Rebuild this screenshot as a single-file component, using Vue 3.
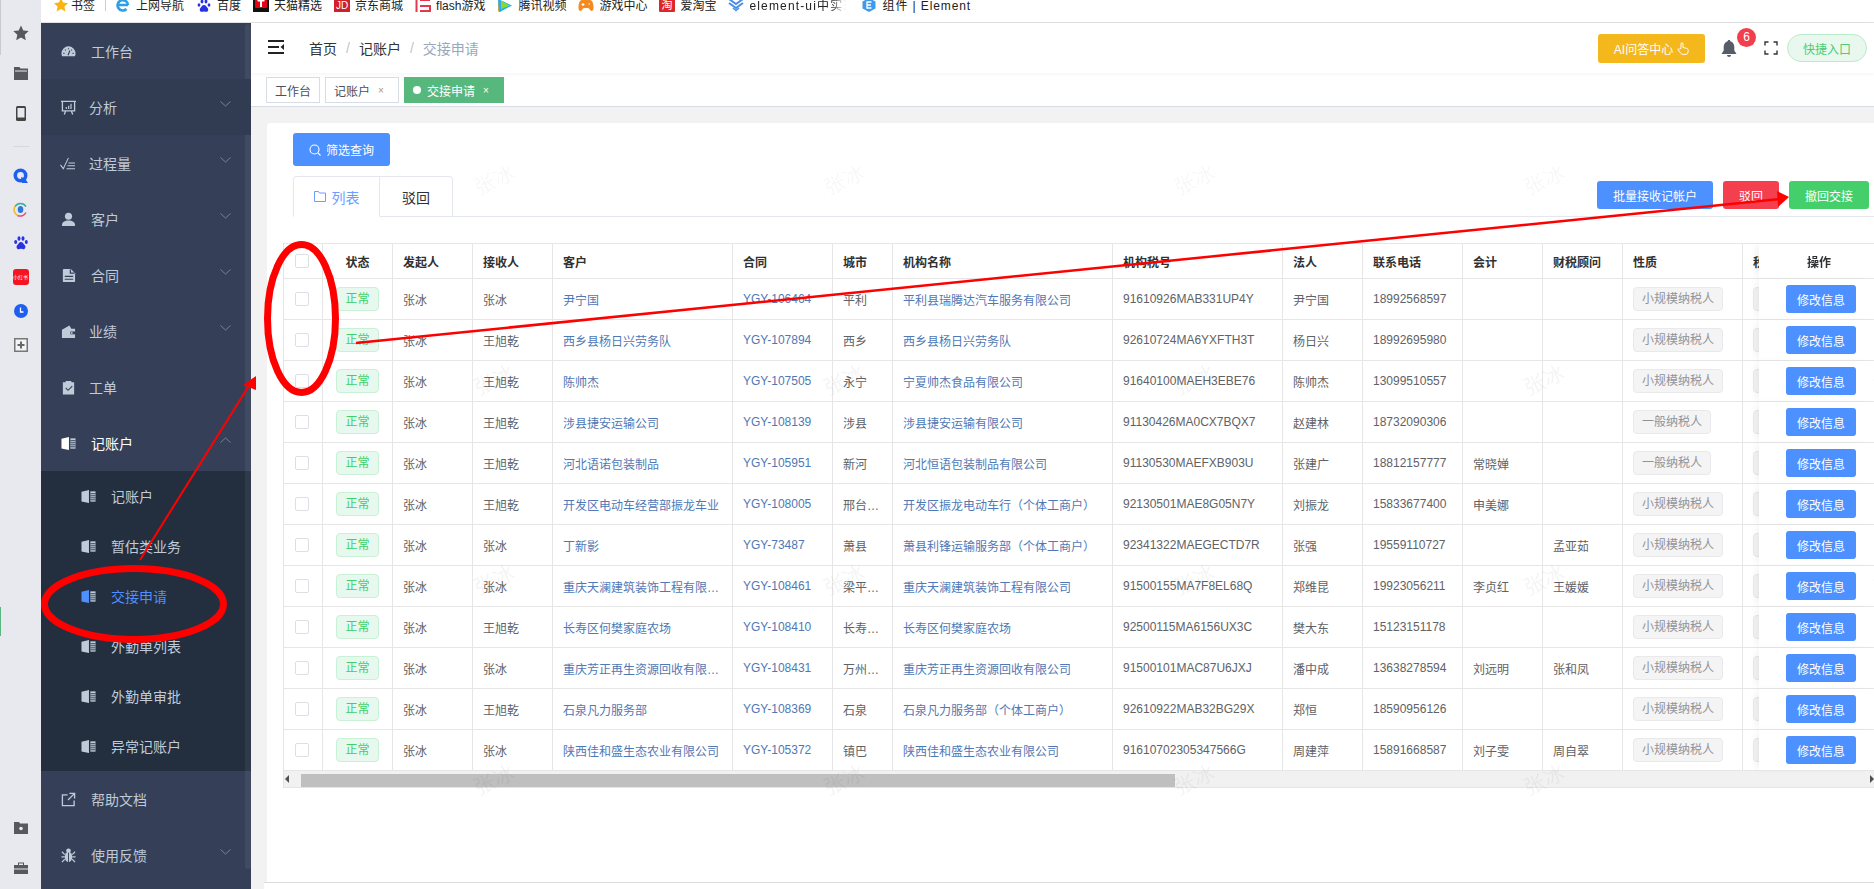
<template>
  <div class="page">
    <aside class="rail">
      <i class="rail-edge"></i>
      <i class="rail-mark"></i>
      <div class="rail-group">
        <span class="rail-btn"><svg width="16" height="16" viewBox="0 0 16 16"><path fill="#55585f" d="M8 .5l2.300 5 5.400.6-4 3.700 1.100 5.400L8 12.400l-4.800 2.800 1.100-5.400-4-3.700 5.400-.6z"/></svg></span>
        <span class="rail-btn"><svg width="14" height="13" viewBox="0 0 14 13"><path fill="#55585f" d="M0 0h5.500l1 1.500H14V13H0z"/><path stroke="#e8e9ef" d="M1 4h12"/></svg></span>
        <span class="rail-btn"><svg width="10" height="15" viewBox="0 0 10 15"><rect width="10" height="15" rx="1.500" fill="#444"/><rect x="1.500" y="2" width="7" height="9.500" fill="#e8e9ef"/></svg></span>
      </div>
      <hr class="rail-sep" />
      <div class="rail-apps">
        <span class="rail-app"><svg width="15" height="15" viewBox="0 0 15 15"><circle cx="7.500" cy="7.500" r="5.200" fill="none" stroke="#1e5ff0" stroke-width="3.600"/><path fill="#1e5ff0" d="M8 9l4 1.500 3 4.500H9z"/></svg></span>
        <span class="rail-app"><svg width="15" height="15" viewBox="0 0 15 15"><path fill="none" stroke="#33b1a0" stroke-width="1.500" d="M2 4.500a6.500 6.500 0 0 1 11 0"/><path fill="none" stroke="#f0b92a" stroke-width="1.500" d="M2 4.500a6.500 6.500 0 0 0 2.500 9"/><path fill="none" stroke="#e84a6f" stroke-width="1.500" d="M4.500 13.500a6.500 6.500 0 0 0 8.500-3"/><ellipse cx="7.500" cy="7.500" rx="2.800" ry="3.600" fill="#2e78d8"/></svg></span>
        <span class="rail-app"><svg width="14" height="14" viewBox="0 0 14 14"><g fill="#2932e1"><ellipse cx="1.700" cy="6" rx="1.500" ry="2"/><ellipse cx="5" cy="2.500" rx="1.500" ry="2.200"/><ellipse cx="9" cy="2.500" rx="1.500" ry="2.200"/><ellipse cx="12.300" cy="6" rx="1.500" ry="2"/><path d="M7 6c-2 0-2.500 2-3.800 3.200C2 10.500 2.500 13.500 5 13.200c1-.1 1.200-.4 2-.4s1 .3 2 .4c2.500.3 3-2.700 1.800-4C9.500 8 9 6 7 6z"/></g></svg></span>
        <span class="rail-app"><span class="red-app">小红书</span></span>
        <span class="rail-app"><svg width="14" height="14" viewBox="0 0 14 14"><circle cx="7" cy="7" r="7" fill="#1e5ff0"/><path d="M6.500 3.500v4.500h3" fill="none" stroke="#fff" stroke-width="1.300"/></svg></span>
        <span class="rail-app"><svg width="14" height="14" viewBox="0 0 14 14"><rect x=".75" y=".75" width="12.500" height="12.500" fill="#f4f4f6" stroke="#777" stroke-width="1.500"/><path d="M3.500 7h7M7 3.500v7" stroke="#666" stroke-width="2"/></svg></span>
      </div>
      <div class="rail-bottom">
        <span class="rail-btn"><svg width="14" height="12" viewBox="0 0 14 12"><path fill="#55585f" d="M0 0h5l1 1.500h8V12H0z"/><circle cx="7" cy="6.500" r="1.800" fill="#e8e9ef"/></svg></span>
        <span class="rail-btn"><svg width="14" height="12" viewBox="0 0 14 12"><path fill="#55585f" d="M0 3h4V.5h6V3h4v3.500H0zM5 1.500V3h4V1.500zM0 7.500h14V12H0z"/></svg></span>
      </div>
    </aside>

    <div class="shell">
      <nav class="bookmarks">
        <span class="bm"><svg class="bm-star" width="14" height="14" viewBox="0 0 16 16"><path fill="#fbb40f" d="M8 0l2.400 5.200 5.600.7-4.100 3.900 1.100 5.600L8 12.600l-5 2.800 1.100-5.600L0 5.900l5.600-.7z"/></svg>书签</span>
        <i class="bm-sep"></i>
        <span class="bm" v-for="b in bookmarks" :key="b.label" :class="b.cls">
          <span class="bm-icon" v-html="b.icon"></span><span class="bm-text">{{ b.label }}</span>
        </span>
      </nav>

      <div class="body">
        <aside class="sidebar">
          <i class="side-scroll"></i>
          <template v-for="m in menu" :key="m.label">
            <div class="menu-item" :class="{ open: m.children, hovered: m.label === '分析' }" :style="{ paddingLeft: m.left + 'px' }">
              <svg class="menu-icon" :width="m.iw || 15" height="15" :viewBox="`0 0 ${m.iw || 16} 16`" v-html="icons[m.icon]"></svg>
              <span class="menu-label" :style="{ marginLeft: m.gap + 'px' }">{{ m.label }}</span>
              <svg v-if="m.arrow || m.children" class="chevron" :class="{ up: m.children }" width="11" height="6" viewBox="0 0 11 6"><path d="M.5.500l5 4.500 5-4.500" fill="none" stroke="#75819a"/></svg>
            </div>
            <div v-if="m.children" class="submenu">
              <div v-for="c in m.children" :key="c" class="sub-item" :class="{ active: c === '交接申请' }">
                <svg class="menu-icon" width="15" height="15" viewBox="0 0 16 16" v-html="icons.book"></svg>
                <span>{{ c }}</span>
              </div>
            </div>
          </template>
        </aside>

        <main class="main">
          <header class="topbar">
            <svg class="fold" width="16" height="14" viewBox="0 0 16 14"><path d="M0 1h16M0 7h11M0 13h16" stroke="#222" stroke-width="1.800"/><path d="M16 4v6L12.500 7z" fill="#222"/></svg>
            <div class="crumbs">
              <span>首页</span><em>/</em><span>记账户</span><em>/</em><span class="current">交接申请</span>
            </div>
            <div class="top-right">
              <button class="ai-btn">AI问答中心
                <svg width="12" height="13" viewBox="0 0 12 13"><path d="M4 6.500V1.800a1 1 0 0 1 2 0v3.700l3.800.9c1 .3 1.500 1 1.400 2l-.4 2.500c-.1.800-.8 1.400-1.600 1.400H5.500c-.6 0-1-.2-1.400-.7L1.200 8.200c-.6-.9.600-2 1.400-1.200z" fill="none" stroke="#fff"/></svg>
              </button>
              <span class="bell">
                <svg width="16" height="17" viewBox="0 0 16 17"><path fill="#565c68" d="M8 0c.8 0 1.300.5 1.300 1.200C12 2 13.300 4.200 13.300 7v3.500L15.500 14H.5l2.200-3.500V7c0-2.800 1.300-5 4-5.800C6.700.5 7.200 0 8 0zM6 15h4a2 2 0 0 1-4 0z"/></svg>
                <b class="badge">6</b>
              </span>
              <svg class="full" width="14" height="14" viewBox="0 0 14 14"><path d="M1 4.500V1h3.500M9.500 1H13v3.500M13 9.500V13H9.500M4.500 13H1V9.500" fill="none" stroke="#333" stroke-width="1.400"/></svg>
              <button class="quick">快捷入口</button>
            </div>
          </header>

          <div class="tags">
            <span class="tag">工作台</span>
            <span class="tag">记账户<i>×</i></span>
            <span class="tag on"><u></u>交接申请<i>×</i></span>
          </div>

          <div class="content">
            <section class="card">
              <button class="btn blue filter">
                <svg width="12" height="12" viewBox="0 0 12 12"><circle cx="5.500" cy="5.500" r="4.500" fill="none" stroke="#fff" stroke-width="1.100"/><path d="M9 9l2.500 2.500" stroke="#fff" stroke-width="1.100"/></svg>筛选查询
              </button>

              <div class="tabbar">
                <div class="tab on">
                  <svg width="12" height="11" viewBox="0 0 12 11"><path d="M.5 10.500V.5h4l1 1.500h6v8.500z" fill="none" stroke="#6f9cff"/></svg>列表
                </div>
                <div class="tab">驳回</div>
                <div class="tab-actions">
                  <button class="btn blue small">批量接收记帐户</button>
                  <button class="btn red small">驳回</button>
                  <button class="btn green small">撤回交接</button>
                </div>
              </div>

              <div class="table-wrap">
                <table class="grid">
                  <colgroup>
                    <col v-for="(w, i) in widths" :key="i" :style="{ width: w + 'px' }" />
                  </colgroup>
                  <thead>
                    <tr>
                      <th class="center"><span class="check"></span></th>
                      <th class="center">状态</th>
                      <th v-for="h in heads" :key="h">{{ h }}</th>
                      <th class="op op-head">操作</th>
                    </tr>
                  </thead>
                  <tbody>
                    <tr v-for="r in rows" :key="r.contract">
                      <td class="center"><span class="check"></span></td>
                      <td class="center"><span class="pill ok">正常</span></td>
                      <td>张冰</td>
                      <td>{{ r.to }}</td>
                      <td class="link">{{ r.client }}</td>
                      <td class="link">{{ r.contract }}</td>
                      <td>{{ r.city }}</td>
                      <td class="link">{{ r.org }}</td>
                      <td>{{ r.tax }}</td>
                      <td>{{ r.legal }}</td>
                      <td>{{ r.phone }}</td>
                      <td>{{ r.acct }}</td>
                      <td>{{ r.adviser }}</td>
                      <td><span class="pill gray">{{ r.kind }}</span></td>
                      <td><span class="pill gray">已报税</span></td>
                      <td class="op"><button class="btn blue edit">修改信息</button></td>
                    </tr>
                  </tbody>
                </table>
                <div class="hscroll">
                  <span class="arrow left"></span>
                  <span class="thumb"></span>
                  <span class="arrow right"></span>
                </div>
              </div>
            </section>
          </div>
          <footer class="foot"></footer>
        </main>
      </div>
    </div>

    <span v-for="w in watermarks" :key="w.key" class="watermark" :style="{ left: w.x + 'px', top: w.y + 'px' }">张冰</span>

    <svg class="marks" width="1874" height="889" viewBox="0 0 1874 889">
      <ellipse cx="301.500" cy="318.500" rx="34" ry="74" fill="none" stroke="#f00" stroke-width="7"/>
      <ellipse cx="134" cy="604" rx="89.500" ry="35.500" fill="none" stroke="#f00" stroke-width="7"/>
      <path d="M140 560L250 384" stroke="#f00" stroke-width="2"/>
      <path d="M256 376L243 385L256 390z" fill="#f00"/>
      <path d="M356 343L1780 199" stroke="#f00" stroke-width="2.500"/>
      <path d="M1789 197L1777 191L1778 207z" fill="#f00"/>
    </svg>
  </div>
</template>

<script setup>
const dark = '#354058'

const icons = {
  gauge: `<path fill="currentColor" d="M8 2.500A7.500 7.500 0 0 0 .5 10c0 1.200.3 2.200.7 3h13.600c.4-.8.7-1.800.7-3A7.500 7.500 0 0 0 8 2.500z"/><path d="M8 4.500v1.200M4.300 6l.8.8M11.700 6l-.8.8M2.500 10h1.200M12.300 10h1.200M7.500 12L9.500 7" stroke="${dark}" stroke-width="1.200" fill="none"/>`,
  board: `<path d="M.5 1.500h16M2 1.500v10h13v-10M5.500 11.500l-1.500 4M11.500 11.500l1.500 4" fill="none" stroke="currentColor" stroke-width="1.400"/><path d="M5.500 7.500h1.300v2H5.500zM8 6h1.300v3.500H8zM10.500 4h1.300v5.500h-1.300z" fill="currentColor"/>`,
  check: `<path d="M.5 9.500l3 4L9 2M9 7.500h7M8 10.500h8M7 13.500h9" fill="none" stroke="currentColor" stroke-width="1.100"/>`,
  user: `<circle cx="8" cy="4.500" r="3.800" fill="currentColor"/><path fill="currentColor" d="M1 14c0-3.300 3-5 7-5s7 1.700 7 5c0 .6-.4 1-1 1H2c-.6 0-1-.4-1-1z"/>`,
  doc: `<path fill="currentColor" d="M3 1h7.500L15 5.500V14a1 1 0 0 1-1 1H3a1 1 0 0 1-1-1V2a1 1 0 0 1 1-1z"/><path d="M4 9h9M4 12h9M10 1.500v4h4.500" stroke="${dark}" stroke-width="1.300" fill="none"/>`,
  wallet: `<path fill="currentColor" d="M1 6l8-4.500L11 5h4v10H1z"/><path fill="${dark}" d="M10 8h6v3h-6z"/><circle cx="11.500" cy="9.500" r="1" fill="currentColor"/>`,
  clip: `<path fill="currentColor" d="M2 2.500h3V1h6v1.500h3V15.500H2z"/><path d="M5 8.500l2.500 2.500L12 6.500" fill="none" stroke="${dark}" stroke-width="1.200"/>`,
  book: `<path fill="currentColor" d="M.5 2.800L8.500 1v14l-8-1.800z"/><path fill="#bfcbd9" d="M10 2.500h5.500v11H10z"/><path d="M10 5h5.500M10 7.200h5.500M10 9.400h5.500M10 11.500h5.500" stroke="${dark}"/>`,
  link: `<path d="M7 3H1.500v11.500H14V9M9 1.500h5.500V7M14.500 1.500L7.500 8.500" fill="none" stroke="currentColor" stroke-width="1.400"/>`,
  bug: `<ellipse cx="8" cy="9.500" rx="4" ry="5.500" fill="currentColor"/><circle cx="8" cy="3" r="2.500" fill="currentColor"/><path d="M1 4l3 3M15 4l-3 3M.5 9.500h3.500M15.500 9.500H12M1 15l3-3M15 15l-3-3" stroke="currentColor" stroke-width="1.300" fill="none"/><path d="M8 5v10" stroke="${dark}"/>`
}

const svg16 = inner => `<svg width="16" height="16" viewBox="0 0 16 16">${inner}</svg>`

const bookmarks = [
  { label: '上网导航', icon: svg16('<path fill="none" stroke="#2c9fe8" stroke-width="2.600" d="M13 7H3.500M13 7a5.200 5.200 0 1 0-1.500 4"/>') },
  { label: '百度', icon: svg16('<g fill="#2932e1"><ellipse cx="3" cy="7" rx="1.400" ry="1.800"/><ellipse cx="6" cy="3.500" rx="1.400" ry="2"/><ellipse cx="10" cy="3.500" rx="1.400" ry="2"/><ellipse cx="13" cy="7" rx="1.400" ry="1.800"/><path d="M8 7c-2 0-2.500 2-3.600 3-1.200 1.200-.7 4 1.700 3.800 1-.1 1.100-.4 1.900-.4s.9.300 1.900.4c2.400.2 2.900-2.600 1.700-3.800C10.500 9 10 7 8 7z"/></g>') },
  { label: '天猫精选', icon: svg16('<rect width="16" height="14" fill="#111"/><rect x="2" width="12" height="10" rx="1" fill="#e60012"/><path d="M4.500 2.500h7M8 2.500V9" stroke="#fff" stroke-width="2"/>') },
  { label: '京东商城', icon: svg16('<rect width="16" height="14" fill="#d0202c"/><text x="2" y="11" font-size="10" font-family="Liberation Sans" fill="#fff">JD</text>') },
  { label: 'flash游戏', icon: svg16('<path fill="none" stroke="#e2384d" stroke-width="2" d="M1.500 0v14M5 2h10M5 8h10v5H5"/>') },
  { label: '腾讯视频', icon: svg16('<path fill="#f7a521" d="M1 0l3 3v8l-3 3z"/><path fill="#25b1ec" d="M1 1l14 6.500L2 14.500z"/><path fill="#8ed631" d="M4 3l9 4.500L4 11z"/>') },
  { label: '游戏中心', icon: svg16('<path fill="#f58a1f" d="M4 2h8c2 0 3 2 3.500 6 .3 3-.5 5-2 5s-2-3-3.500-3H6c-1.500 0-2 3-3.500 3s-2.300-2-2-5C1 4 2 2 4 2z"/><path d="M5 5v3M3.500 6.500h3M10.500 6h1.500" stroke="#fff" stroke-width="1.200"/>') },
  { label: '爱淘宝', icon: svg16('<rect width="16" height="14" rx="1" fill="#dd2727"/><text x="2.500" y="11" font-size="11" font-family="Noto Sans CJK SC" fill="#fff">淘</text>') },
  { label: 'element-ui中实现', cls: 'wide', icon: svg16('<path d="M1 1l7 5 7-5M1 5l7 5 7-5" fill="none" stroke="#4a8ee8" stroke-width="2"/><path d="M5 10l3 2.500 3-2.500" fill="none" stroke="#4a8ee8" stroke-width="1.500"/>') },
  { label: '组件 | Element', cls: 'last', icon: svg16('<path fill="#3f9bea" d="M8 0l6.500 3.500v7L8 14 1.500 10.500v-7z"/><path d="M10.500 4H6v6h4.500M6 7h4" stroke="#fff" stroke-width="1.300" fill="none"/>') }
]

const subs = ['记账户', '暂估类业务', '交接申请', '外勤单列表', '外勤单审批', '异常记账户']
const menu = [
  { label: '工作台', icon: 'gauge', left: 20, gap: 15 },
  { label: '分析', icon: 'board', iw: 17, left: 19, gap: 12, arrow: true },
  { label: '过程量', icon: 'check', left: 19, gap: 14, arrow: true },
  { label: '客户', icon: 'user', left: 20, gap: 15, arrow: true },
  { label: '合同', icon: 'doc', left: 20, gap: 15, arrow: true },
  { label: '业绩', icon: 'wallet', left: 20, gap: 13, arrow: true },
  { label: '工单', icon: 'clip', left: 20, gap: 13 },
  { label: '记账户', icon: 'book', left: 20, gap: 15, children: subs },
  { label: '帮助文档', icon: 'link', left: 20, gap: 15 },
  { label: '使用反馈', icon: 'bug', left: 20, gap: 15, arrow: true }
]

const widths = [39, 70, 80, 80, 180, 100, 60, 220, 170, 80, 100, 80, 80, 120, 120, 115]
const heads = ['发起人', '接收人', '客户', '合同', '城市', '机构名称', '机构税号', '法人', '联系电话', '会计', '财税顾问', '性质', '税务类型']

const small = '小规模纳税人'
const general = '一般纳税人'
const rows = [
  { to: '张冰', client: '尹宁国', contract: 'YGY-106464', city: '平利', org: '平利县瑞腾达汽车服务有限公司', tax: '91610926MAB331UP4Y', legal: '尹宁国', phone: '18992568597', acct: '', adviser: '', kind: small },
  { to: '王旭乾', client: '西乡县杨日兴劳务队', contract: 'YGY-107894', city: '西乡', org: '西乡县杨日兴劳务队', tax: '92610724MA6YXFTH3T', legal: '杨日兴', phone: '18992695980', acct: '', adviser: '', kind: small },
  { to: '王旭乾', client: '陈帅杰', contract: 'YGY-107505', city: '永宁', org: '宁夏帅杰食品有限公司', tax: '91640100MAEH3EBE76', legal: '陈帅杰', phone: '13099510557', acct: '', adviser: '', kind: small },
  { to: '王旭乾', client: '涉县捷安运输公司', contract: 'YGY-108139', city: '涉县', org: '涉县捷安运输有限公司', tax: '91130426MA0CX7BQX7', legal: '赵建林', phone: '18732090306', acct: '', adviser: '', kind: general },
  { to: '王旭乾', client: '河北语诺包装制品', contract: 'YGY-105951', city: '新河', org: '河北恒语包装制品有限公司', tax: '91130530MAEFXB903U', legal: '张建广', phone: '18812157777', acct: '常晓婵', adviser: '', kind: general },
  { to: '王旭乾', client: '开发区电动车经营部振龙车业', contract: 'YGY-108005', city: '邢台市信都区', org: '开发区振龙电动车行（个体工商户）', tax: '92130501MAE8G05N7Y', legal: '刘振龙', phone: '15833677400', acct: '申美娜', adviser: '', kind: small },
  { to: '张冰', client: '丁新影', contract: 'YGY-73487', city: '萧县', org: '萧县利锋运输服务部（个体工商户）', tax: '92341322MAEGECTD7R', legal: '张强', phone: '19559110727', acct: '', adviser: '孟亚茹', kind: small },
  { to: '张冰', client: '重庆天澜建筑装饰工程有限公司', contract: 'YGY-108461', city: '梁平区双桂街道', org: '重庆天澜建筑装饰工程有限公司', tax: '91500155MA7F8EL68Q', legal: '郑维昆', phone: '19923056211', acct: '李贞红', adviser: '王媛媛', kind: small },
  { to: '王旭乾', client: '长寿区何樊家庭农场', contract: 'YGY-108410', city: '长寿区凤城街道', org: '长寿区何樊家庭农场', tax: '92500115MA6156UX3C', legal: '樊大东', phone: '15123151178', acct: '', adviser: '', kind: small },
  { to: '张冰', client: '重庆芳正再生资源回收有限公司', contract: 'YGY-108431', city: '万州区高笋塘街道', org: '重庆芳正再生资源回收有限公司', tax: '91500101MAC87U6JXJ', legal: '潘中成', phone: '13638278594', acct: '刘远明', adviser: '张和凤', kind: small },
  { to: '王旭乾', client: '石泉凡力服务部', contract: 'YGY-108369', city: '石泉', org: '石泉凡力服务部（个体工商户）', tax: '92610922MAB32BG29X', legal: '郑恒', phone: '18590956126', acct: '', adviser: '', kind: small },
  { to: '张冰', client: '陕西佳和盛生态农业有限公司', contract: 'YGY-105372', city: '镇巴', org: '陕西佳和盛生态农业有限公司', tax: '91610702305347566G', legal: '周建萍', phone: '15891668587', acct: '刘子雯', adviser: '周自翠', kind: small }
]

// 水印：每 350×200 一个
const watermarks = []
for (const y of [180, 380, 580, 780]) {
  for (const x of [494, 844, 1194, 1544, 1894]) {
    watermarks.push({ key: `${x}-${y}`, x, y })
  }
}
</script>

<style>
html, body {
  margin: 0;
  padding: 0;
  overflow: hidden;
  background: #fff;
  font-family: "Liberation Sans", "Noto Sans CJK SC", sans-serif;
}
</style>

<style scoped>
.page {
  position: relative;
  display: flex;
  width: 1874px;
  height: 889px;
  overflow: hidden;
  font-size: 12px;
  color: #606266;
}

/* browser side rail */
.rail {
  position: relative;
  flex: none;
  width: 41px;
  display: flex;
  flex-direction: column;
  align-items: center;
  background: #e8e9ef;
  padding-top: 13px;
  box-sizing: border-box;
}
.rail-edge {
  position: absolute;
  left: 0;
  top: 0;
  width: 1px;
  height: 55px;
  background: #c9cad0;
}
.rail-mark {
  position: absolute;
  left: 0;
  top: 607px;
  width: 1px;
  height: 29px;
  background: #5cb67f;
}
.rail-btn, .rail-app {
  display: flex;
  align-items: center;
  justify-content: center;
  width: 41px;
}
.rail-btn { height: 40px; }
.rail-app { height: 34px; }
.rail-group { display: flex; flex-direction: column; }
.rail-sep {
  width: 16px;
  margin: 13px 0 11px;
  border: 0;
  border-top: 1px solid #d6d7dd;
}
.rail-apps { display: flex; flex-direction: column; }
.red-app {
  display: block;
  width: 16px;
  height: 16px;
  line-height: 16px;
  border-radius: 3px;
  background: #f5141f;
  color: #fff;
  font-size: 5px;
  text-align: center;
  white-space: nowrap;
}
.rail-bottom {
  margin-top: auto;
  padding-bottom: 1px;
  display: flex;
  flex-direction: column;
}

.shell {
  flex: 1;
  min-width: 0;
  display: flex;
  flex-direction: column;
}

/* bookmarks */
.bookmarks {
  flex: none;
  height: 22px;
  display: flex;
  align-items: flex-start;
  padding-left: 13px;
  border-bottom: 1px solid #e2e2e2;
  background: #fff;
  color: #222;
  line-height: 12px;
  white-space: nowrap;
}
.bm {
  display: flex;
  align-items: flex-start;
  margin-right: 12px;
}
.bm-star { margin: -2px 3px 0 0; }
.bm-icon {
  display: block;
  width: 16px;
  height: 14px;
  margin-right: 5px;
  margin-top: -2px;
  overflow: hidden;
}
.bm-sep {
  width: 1px;
  height: 11px;
  margin: 0 9px 0 -2px;
  background: #ccc;
}
.bm.wide .bm-text {
  width: 97px;
  overflow: hidden;
  letter-spacing: 1.15px;
  -webkit-mask-image: linear-gradient(90deg, #000 85%, transparent);
  mask-image: linear-gradient(90deg, #000 85%, transparent);
}
.bm.wide { margin-right: 15px; }
.bm.last .bm-text { letter-spacing: .9px; }

.body {
  flex: 1;
  min-height: 0;
  display: flex;
}

/* sidebar */
.sidebar {
  position: relative;
  flex: none;
  width: 210px;
  background: #354058;
  color: #bfcbd9;
  font-size: 14px;
}
.side-scroll {
  position: absolute;
  right: 0;
  top: 1px;
  width: 6px;
  height: 845px;
  border-radius: 4px;
  background: rgba(255, 255, 255, .06);
}
.menu-item {
  position: relative;
  display: flex;
  align-items: center;
  height: 56px;
}
.menu-item.hovered { background: #313c52; }
.menu-item.open { color: #fff; }
.menu-icon { flex: none; display: block; }
.chevron {
  position: absolute;
  left: 179px;
  top: 22px;
}
.chevron.up { transform: rotate(180deg); }
.submenu { background: #232e3f; }
.sub-item {
  display: flex;
  align-items: center;
  height: 50px;
  padding-left: 40px;
  gap: 15px;
}
.sub-item.active { color: #4d90ff; }

/* main */
.main {
  flex: 1;
  min-width: 0;
  display: flex;
  flex-direction: column;
  background: #f2f2f2;
}
.topbar {
  flex: none;
  height: 50px;
  display: flex;
  align-items: center;
  padding: 0 7px 0 17px;
  background: #fff;
  box-shadow: 0 1px 4px rgba(0, 0, 0, .05);
  position: relative;
}
.fold { flex: none; margin-top: -2px; }
.crumbs {
  display: flex;
  align-items: center;
  margin-left: 25px;
  font-size: 14px;
  color: #333;
}
.crumbs em {
  font-style: normal;
  margin: 0 9px;
  color: #c0c4cc;
}
.crumbs .current { color: #97a8be; }
.top-right {
  margin-left: auto;
  display: flex;
  align-items: center;
}
.ai-btn {
  display: flex;
  align-items: center;
  justify-content: center;
  gap: 4px;
  width: 107px;
  height: 29px;
  padding: 0;
  border: 0;
  border-radius: 3px;
  background: #f4b71c;
  color: #fff;
  font: inherit;
}
.bell {
  position: relative;
  display: block;
  margin-left: 16px;
  height: 17px;
}
.badge {
  position: absolute;
  left: 16px;
  top: -12px;
  width: 19px;
  height: 19px;
  line-height: 19px;
  border-radius: 50%;
  background: #f23f4e;
  color: #fff;
  font-weight: 400;
  text-align: center;
}
.full { margin-left: 27px; }
.quick {
  width: 80px;
  height: 28px;
  margin-left: 9px;
  padding: 0;
  border: 1px solid #b9ecca;
  border-radius: 14px;
  background: #e8f8ee;
  color: #4ecb73;
  font: inherit;
}

.tags {
  flex: none;
  height: 29px;
  display: flex;
  align-items: flex-start;
  gap: 5px;
  padding: 4px 0 0 15px;
  background: #fff;
  border-bottom: 1px solid #d8dce5;
}
.tag {
  display: flex;
  align-items: center;
  height: 26px;
  padding: 0 8px;
  box-sizing: border-box;
  border: 1px solid #d8dce5;
  color: #495060;
}
.tag i {
  font-style: normal;
  font-size: 10px;
  color: #999;
  margin: 0 6px 0 8px;
}
.tag.on {
  border-color: #57b87e;
  background: #57b87e;
  color: #fff;
}
.tag.on i { color: #fff; }
.tag.on u {
  display: block;
  width: 8px;
  height: 8px;
  margin-right: 6px;
  border-radius: 50%;
  background: #fff;
}

.content {
  flex: 1;
  min-height: 0;
  padding: 16px 0 0 16px;
  display: flex;
}
.card {
  flex: 1;
  min-width: 0;
  box-sizing: border-box;
  padding: 10px 0 0 16px;
  background: #fff;
  border-radius: 4px 0 0 0;
}
.foot {
  flex: none;
  height: 6px;
  margin-left: 13px;
  border-top: 1px solid #dcdcdc;
  background: #fff;
}

.btn {
  display: inline-flex;
  align-items: center;
  justify-content: center;
  padding: 0;
  border: 0;
  border-radius: 3px;
  color: #fff;
  font: inherit;
}
.btn.blue { background: #4d90ff; }
.btn.red { background: #f43f4e; }
.btn.green { background: #45cf6a; }
.filter {
  width: 97px;
  height: 33px;
  gap: 5px;
  margin-left: 10px;
  display: flex;
}
.small { height: 28px; }
.small:nth-child(1) { width: 116px; }
.small:nth-child(2) { width: 56px; }
.small:nth-child(3) { width: 80px; }

.tabbar {
  display: flex;
  height: 41px;
  box-sizing: border-box;
  margin: 10px 0 26px 10px;
  border-bottom: 1px solid #e4e7ed;
  font-size: 14px;
  color: #303133;
}
.tab {
  display: flex;
  align-items: center;
  justify-content: center;
  gap: 6px;
  width: 73px;
  height: 41px;
  box-sizing: border-box;
  border: 1px solid #e4e7ed;
  border-left: 0;
  border-radius: 0 4px 0 0;
}
.tab.on {
  width: 87px;
  color: #6f9cff;
  border-left: 1px solid #e4e7ed;
  border-right: 1px solid #e4e7ed;
  border-bottom-color: #fff;
  border-radius: 4px 0 0 0;
}
.tab-actions {
  margin-left: auto;
  display: flex;
  gap: 10px;
  padding: 5px 5px 0 0;
  font-size: 12px;
}

.table-wrap {
  overflow: hidden;
  border-left: 1px solid #e4e4e4;
}
.grid {
  table-layout: fixed;
  width: 1694px;
  border-collapse: separate;
  border-spacing: 0;
}
.grid th, .grid td {
  box-sizing: border-box;
  padding: 0 10px;
  border-right: 1px solid #e6e6e6;
  border-bottom: 1px solid #e6e6e6;
  white-space: nowrap;
  overflow: hidden;
  text-overflow: ellipsis;
  text-align: left;
}
.grid th {
  height: 36px;
  border-top: 1px solid #e6e6e6;
  color: #303133;
  font-weight: 700;
}
.grid td { height: 41px; }
.grid .center { padding: 0; text-align: center; }
.grid .link { color: #4f78b5; }
.grid .op {
  position: sticky;
  right: 0;
  z-index: 2;
  padding: 0 0 0 27px;
  background: #fff;
  border-right: 0;
  overflow: visible;
  box-shadow: -5px 0 8px -3px rgba(0, 0, 0, .07);
}
.grid .op-head { padding: 0 0 0 48px; }
.check {
  display: block;
  width: 14px;
  height: 14px;
  margin: 0 auto;
  position: relative;
  left: -1px;
  box-sizing: border-box;
  border: 1px solid #dcdfe6;
  border-radius: 2px;
  background: #fff;
}
.pill {
  display: inline-block;
  height: 24px;
  line-height: 22px;
  padding: 0 8px;
  box-sizing: border-box;
  border-radius: 4px;
  border: 1px solid;
  vertical-align: middle;
}
.pill.ok {
  background: #e7f9ee;
  border-color: #c8f1d6;
  color: #3fd06a;
}
.pill.gray {
  background: #f4f4f5;
  border-color: #e9e9eb;
  color: #909399;
}
.edit {
  width: 70px;
  height: 28px;
  vertical-align: middle;
}

.hscroll {
  display: flex;
  height: 17px;
  box-sizing: border-box;
  background: #f1f1f1;
  border-bottom: 1px solid #e4e4e4;
}
.arrow {
  flex: none;
  width: 17px;
  height: 16px;
  position: relative;
}
.arrow::before {
  content: "";
  position: absolute;
  top: 4px;
  border: 4px solid transparent;
}
.arrow.left::before { left: 1px; border-right-color: #505050; border-left: 0; }
.arrow.right { margin-left: auto; }
.arrow.right::before { right: 0; border-left-color: #505050; border-right: 0; }
.thumb {
  flex: none;
  width: 874px;
  height: 13px;
  margin-top: 3px;
  background: #bfbfbf;
}

.watermark {
  position: absolute;
  z-index: 5;
  font-size: 21px;
  line-height: 1;
  color: rgba(0, 0, 0, .045);
  transform: translate(-50%, -50%) rotate(-25deg);
  pointer-events: none;
  white-space: nowrap;
}
.marks {
  position: absolute;
  left: 0;
  top: 0;
  z-index: 10;
  pointer-events: none;
}
</style>
